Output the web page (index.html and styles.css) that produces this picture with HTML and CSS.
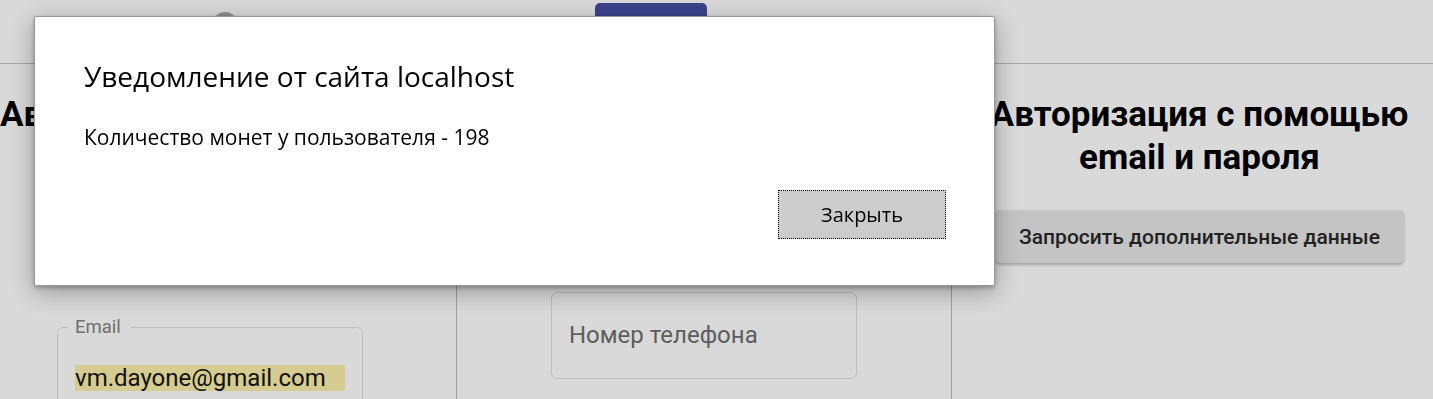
FILE: index.html
```html
<!DOCTYPE html>
<html lang="ru">
<head>
  <meta charset="UTF-8" />
  <meta name="viewport" content="width=device-width, initial-scale=1.0"/>
  <title>Авторизация</title>
  <link rel="stylesheet" href="styles.css">
</head>
<body>
  <header class="topbar">
    <div class="avatar"></div>
    <button class="tab-btn">Войти</button>
  </header>

  <main class="auth-grid">
    <!-- Email -->
    <section class="auth-col">
      <h2 class="col-title left">Авторизация через Google</h2>
      <fieldset class="field email-field">
        <legend>Email</legend>
        <span class="autofill">vm.dayone@gmail.com</span>
      </fieldset>
    </section>

    <!-- Phone -->
    <section class="auth-col">
      <h2 class="col-title">Авторизация по номеру телефона</h2>
      <div class="field phone-field">
        <span class="placeholder">Номер телефона</span>
      </div>
    </section>

    <!-- Password -->
    <section class="auth-col shifted">
      <h2 class="col-title">Авторизация с помощью email и пароля</h2>
      <button class="extra-btn">Запросить дополнительные данные</button>
    </section>
  </main>

  <!-- Browser alert -->
  <div class="alert">
    <div class="alert-title">Уведомление от сайта localhost</div>
    <div class="alert-text">Количество монет у пользователя - 198</div>
    <div class="alert-actions">
      <button class="alert-btn">Закрыть</button>
    </div>
  </div>
</body>
</html>
```

FILE: styles.css
```css
* {
  margin: 0;
  padding: 0;
  box-sizing: border-box;
}

body {
  background-color: #d9d9d9;
  font-family: Roboto, "Liberation Sans", sans-serif;
  color: #000;
  height: 399px;
  overflow: hidden;
}

/* Header */
.topbar {
  height: 64px;
  border-bottom: 1px solid #a8a8a8;
  display: flex;
  align-items: flex-start;
}

.avatar {
  width: 26px;
  height: 26px;
  border-radius: 50%;
  background-color: #8f8f8f;
  margin-left: 212px;
  margin-top: 12px;
}

.tab-btn {
  margin-left: 357px;
  margin-top: 3px;
  width: 112px;
  height: 50px;
  border: none;
  border-radius: 5px;
  background-color: #3b4289;
  color: #fff;
  font-family: Roboto, sans-serif;
  font-size: 14px;
}

/* Columns */
.auth-grid {
  display: grid;
  grid-template-columns: 457px 495px 1fr;
  height: 335px;
}

.auth-col {
  display: flex;
  flex-direction: column;
  align-items: center;
  border-right: 1px solid #9e9e9e;
  padding-top: 29px;
}

.auth-col:last-child {
  border-right: none;
}

.auth-col.shifted {
  padding-left: 14px;
}

.col-title {
  font-size: 35px;
  font-weight: 700;
  line-height: 43px;
  text-align: center;
  width: 450px;
}

.col-title.left {
  text-align: left;
  align-self: flex-start;
  white-space: nowrap;
}

.field {
  width: 306px;
  border: 1px solid #bdbdbd;
  border-radius: 6px;
  padding: 0 17px;
  height: 88px;
}

.email-field {
  align-self: flex-start;
  margin-left: 57px;
  margin-top: 182px;
}

.field legend {
  font-size: 18.5px;
  color: #6e6e6e;
  margin-left: -7px;
  padding: 0 10px 0 7px;
  line-height: 18px;
}

.autofill {
  display: inline-block;
  margin-top: 29px;
  background-color: #d6cb91;
  font-size: 24px;
  line-height: 26px;
  padding-right: 19px;
  color: #111;
}

.phone-field {
  display: flex;
  align-items: center;
  height: 87px;
  margin-top: 113px;
}

.placeholder {
  font-size: 24px;
  color: #5d5d5d;
  padding-bottom: 1px;
}

.extra-btn {
  margin-top: 31px;
  width: 409px;
  height: 53px;
  border: none;
  border-radius: 5px;
  background-color: #c4c4c4;
  box-shadow: 0 2px 3px rgba(0, 0, 0, 0.25);
  font-family: Roboto, sans-serif;
  font-size: 21px;
  font-weight: 500;
  color: #222;
}

/* Alert dialog */
.alert {
  position: fixed;
  left: 34px;
  top: 16px;
  width: 961px;
  height: 270px;
  background-color: #fff;
  border: 1px solid #9a9a9a;
  border-radius: 2px;
  box-shadow: 0 6px 24px rgba(0, 0, 0, 0.3), 0 2px 4px rgba(0, 0, 0, 0.25);
  padding: 40px 48px 0 49px;
  font-family: "Open Sans", "Noto Sans", sans-serif;
  display: flex;
  flex-direction: column;
}

.alert-title {
  font-size: 28px;
  line-height: 38px;
}

.alert-text {
  margin-top: 28px;
  font-size: 21px;
  line-height: 28px;
}

.alert-actions {
  display: flex;
  justify-content: flex-end;
  margin-top: 39px;
}

.alert-btn {
  width: 168px;
  height: 49px;
  background-color: #cccccc;
  border: 1px dotted #000;
  font-family: "Open Sans", "Noto Sans", sans-serif;
  font-size: 20px;
  color: #000;
}
```
